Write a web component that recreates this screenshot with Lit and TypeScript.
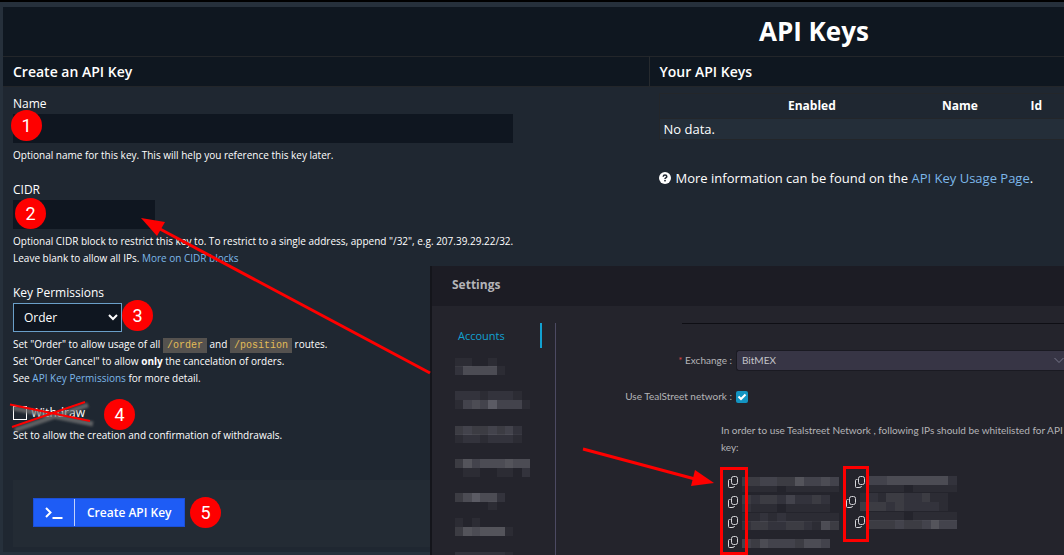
import { LitElement, html, svg, css } from "lit";
import { customElement, property } from "lit/decorators.js";

interface MaskRow {
  y: number;
  cells: string;
}

const CELL_W = 8.8;

/** A pixelated strip that hides a piece of private text. */
@customElement("masked-text")
export class MaskedText extends LitElement {
  @property({ attribute: false }) rows: MaskRow[] = [];
  @property({ type: Number }) height = 20;
  @property({ type: Number }) cell = CELL_W;

  static styles = css`
    :host {
      display: block;
      flex: none;
    }
    svg {
      display: block;
    }
  `;

  render() {
    const cols = Math.max(0, ...this.rows.map((r) => r.cells.length));
    return html`<svg
      width=${cols * this.cell}
      height=${this.height}
      shape-rendering="crispEdges"
      aria-hidden="true"
    >
      ${this.rows.map((r) =>
        [...r.cells].map(
          (level, i) => svg`<rect x=${i * this.cell} y=${r.y} width=${this.cell} height="9"
            fill="#74747c" fill-opacity=${Number(level) / 10}></rect>`
        )
      )}
    </svg>`;
  }
}

const MENU_MASKS: MaskRow[] = [
  { y: 10, cells: "110010" },
  { y: 18, cells: "255551" },
  { y: 43, cells: "222122210" },
  { y: 52, cells: "145474441" },
  { y: 78, cells: "34334342" },
  { y: 86, cells: "12212221" },
  { y: 111, cells: "364555655" },
  { y: 120, cells: "011001102" },
  { y: 145, cells: "357552" },
  { y: 153, cells: "000010" },
  { y: 170, cells: "101000" },
  { y: 179, cells: "3656661" },
  { y: 204, cells: "2222221" },
];

const ADDRESSES: MaskRow[][][] = [
  [
    [{ y: 5, cells: "33443364454" }, { y: 14, cells: "11110111111" }],
    [{ y: 4, cells: "4455555552" }, { y: 13, cells: "1111011111" }],
  ],
  [
    [{ y: 3, cells: "3233242232" }, { y: 12, cells: "2111011111" }],
    [{ y: 1, cells: "1213322311" }, { y: 10, cells: "3332322221" }],
  ],
  [
    [{ y: 1, cells: "11212111111" }, { y: 9, cells: "23322332153" }],
    [{ y: 0, cells: "1111011111" }, { y: 8, cells: "3334334644" }],
  ],
  [[{ y: 7, cells: "4354443554" }]],
];

@customElement("settings-window")
export class SettingsWindow extends LitElement {
  static styles = css`
    :host {
      display: flex;
      flex-direction: column;
      box-sizing: border-box;
      overflow: hidden;
      border-left: 2px solid #14151b;
      background: #24242c;
      color: #b4b4b8;
      font: 10px/17px Lato, "Open Sans", sans-serif;
    }
    .title {
      margin: 0;
      padding: 0 20px 3px;
      background: #1c1c24;
      font: 700 12px/37px "Open Sans", "Noto Sans", sans-serif;
    }
    .body {
      display: flex;
      flex: 1;
      padding-top: 17px;
      min-height: 0;
    }
    .menu {
      flex: none;
      width: 123px;
      overflow: hidden;
      border-right: 1px solid #4c4a62;
    }
    .item {
      display: block;
      width: 82px;
      padding-left: 26px;
      border-right: 2px solid #12a1d1;
      color: #12a1d1;
      font: 11px/25px "Open Sans", "Noto Sans", sans-serif;
      text-decoration: none;
    }
    .masked {
      padding-left: 23px;
    }
    .form {
      flex: 1;
      min-width: 0;
      display: flex;
      flex-direction: column;
      gap: 17px;
    }
    .rule {
      margin-left: 126px;
      margin-bottom: 9px;
      border-top: 1px solid #0e0e14;
    }
    .row {
      display: flex;
      align-items: center;
      gap: 4px;
    }
    .caption {
      flex: none;
      width: 176px;
      text-align: right;
    }
    .required {
      color: #d94848;
    }
    .picker {
      flex: 1;
      min-width: 0;
      display: grid;
      align-items: center;
    }
    .picker > * {
      grid-area: 1 / 1;
    }
    .picker svg {
      justify-self: end;
      pointer-events: none;
    }
    select {
      width: 100%;
      height: 21px;
      padding: 0 5px;
      appearance: none;
      border: 1px solid #1a1a22;
      border-right: 0;
      border-radius: 3px 0 0 3px;
      background: #373545;
      color: #c4c4c8;
      font: inherit;
    }
    .tick {
      display: grid;
      width: 12px;
      height: 17px;
      align-items: center;
    }
    .tick > * {
      grid-area: 1 / 1;
    }
    .tick input {
      width: 12px;
      height: 12px;
      margin: 0;
      appearance: none;
      border-radius: 2px;
      background: #1394c2;
    }
    .tick svg {
      pointer-events: none;
    }
    .note {
      margin: 0 0 0 165px;
    }
    .list {
      margin: -1px 0 0 172px;
    }
    .addresses {
      display: flex;
      gap: 16px;
    }
    .address {
      display: flex;
      align-items: center;
      gap: 4px;
    }
    .copy {
      display: block;
      width: 10px;
      height: 20px;
      padding: 0;
      border: 0;
      background: none;
      color: #d6d6da;
    }
    .copy svg {
      display: block;
    }
  `;

  render() {
    return html`
      <h2 class="title">Settings</h2>
      <div class="body">
        <nav class="menu">
          <a class="item" href="#accounts">Accounts</a>
          <masked-text class="masked" .rows=${MENU_MASKS} .height=${220} .cell=${8.35}></masked-text>
        </nav>
        <div class="form">
          <div class="rule"></div>
          <div class="row">
            <label class="caption" for="exchange"><span class="required">*</span> Exchange :</label>
            <div class="picker">
              <select id="exchange"><option>BitMEX</option></select>
              <svg width="11" height="7" viewBox="0 0 11 7" fill="none" stroke="#77778a">
                <path d="M1.5 1 L6 5.5 L10.500 1"></path>
              </svg>
            </div>
          </div>
          <div class="row">
            <label class="caption" for="network">Use TealStreet network :</label>
            <span class="tick">
              <input id="network" type="checkbox" checked />
              <svg width="12" height="12" viewBox="0 0 12 12" fill="none" stroke="#fff" stroke-width="2">
                <path d="M2.500 5.500 L5 8 L9.500 3.500"></path>
              </svg>
            </span>
          </div>
          <p class="note">
            In order to use Tealstreet Network , following IPs should be whitelisted for API key:
          </p>
          <div class="list">
            ${ADDRESSES.map(
              (line) => html`<div class="addresses">
                ${line.map(
                  (rows) => html`<div class="address">
                    <button class="copy" aria-label="Copy address">
                      <svg width="10" height="12" viewBox="0 0 10 12" fill="none" stroke="currentColor">
                        <rect x="3.500" y="0.500" width="6" height="8" rx="2"></rect>
                        <path d="M2.500 3.500 H1.500 Q0.500 3.500 0.500 4.500 V10.500 Q0.500 11.500 1.500 11.500 H4 Q6.500 11.500 6.500 10"></path>
                      </svg>
                    </button>
                    <masked-text .rows=${rows}></masked-text>
                  </div>`
                )}
              </div>`
            )}
          </div>
        </div>
      </div>
    `;
  }
}

@customElement("app-root")
export class AppRoot extends LitElement {
  static styles = css`
    :host {
      display: block;
      position: relative;
      box-sizing: border-box;
      min-height: 100vh;
      overflow: hidden;
      border-top: 2px solid #000;
      background: #26303b;
      color: #fff;
      font: 13px/20px "Open Sans", "Noto Sans", sans-serif;
    }
    * {
      box-sizing: border-box;
    }
    a {
      color: #7db8ea;
      text-decoration: none;
    }
    .page {
      width: 153%;
      padding: 5px 3px 3px;
    }
    h1 {
      margin: 0;
      background: #0f1720;
      font-size: 26px;
      line-height: 49px;
      text-align: center;
      font-weight: 700;
    }
    .columns {
      display: grid;
      grid-template-columns: 39.8% 1fr;
      background: #1f2731;
    }
    .column + .column .subtitle {
      border-left: 1px solid #262a2e;
    }
    .subtitle {
      margin: 0;
      padding: 0 10px;
      border: 1px solid #23262a;
      border-width: 1px 0;
      background: #0f1720;
      font-size: 14px;
      line-height: 29px;
      font-weight: 600;
    }
    form {
      display: flex;
      flex-direction: column;
      gap: 16px;
      padding: 7px 10px 5px;
      font-size: 12px;
    }
    .field {
      display: grid;
      justify-items: start;
    }
    .control {
      position: relative;
      display: flex;
      align-items: center;
      gap: 4px;
    }
    .text,
    .choice {
      height: 29px;
      border: 0;
      background: #0f1620;
      color: #fff;
      font: inherit;
    }
    .text {
      width: 500px;
    }
    .short {
      width: 142px;
    }
    .choice {
      width: 109px;
      padding: 0 6px;
      border: 1px solid #6a9fc9;
    }
    .hint {
      margin: 4px 0 0;
      font-size: 10px;
      line-height: 17px;
    }
    code {
      padding: 2px 4px;
      background: #55524f;
      color: #e3bd58;
      font: 10px "Liberation Mono", monospace;
    }
    .box {
      width: 14px;
      height: 14px;
      margin: 0;
      appearance: none;
      border: 1px solid #fff;
    }
    .badge {
      position: absolute;
      width: 31px;
      height: 31px;
      border-radius: 50%;
      background: #fe0000;
      font: 18px/31px Roboto, "Liberation Sans", sans-serif;
      text-align: center;
    }
    .b1 {
      left: -2px;
      top: -4px;
    }
    .b2 {
      left: 2px;
      top: -2px;
    }
    .b3 {
      left: 109px;
      top: -3px;
    }
    .b4 {
      left: 91px;
      top: -4px;
    }
    .b5 {
      left: 157px;
      top: -1px;
    }
    .strike {
      position: absolute;
      left: -4px;
      top: -4px;
    }
    .actions {
      display: flex;
      margin-top: 20px;
      padding: 18px 20px 20px;
      background: #232b34;
    }
    .create {
      display: flex;
      height: 29px;
      padding: 0;
      border: 1px solid #1c4fd6;
      background: #1e5cf5;
      color: #fff;
      font: 600 12px/27px "Open Sans", "Noto Sans", sans-serif;
    }
    .prompt {
      display: grid;
      place-items: center;
      width: 41px;
      height: 27px;
      border-right: 1px solid #c3d2fb;
    }
    .create-text {
      padding: 0 12px;
    }
    .keys {
      padding: 6px 10px;
    }
    table {
      width: 100%;
      border-collapse: collapse;
      table-layout: fixed;
      border: 1px solid #23262a;
    }
    th {
      height: 25px;
      padding: 0;
      font-size: 12px;
      line-height: 18px;
      font-weight: 700;
    }
    .c-blank {
      width: 6%;
    }
    .c-enabled {
      width: 20%;
    }
    .c-name {
      width: 11%;
    }
    .c-id {
      width: 5%;
    }
    td {
      height: 20px;
      padding: 0 4px;
      border-top: 1px solid #23262a;
      background: #242e39;
    }
    .more {
      display: flex;
      align-items: center;
      gap: 5px;
      margin: 28px 0 0;
    }
    .window {
      position: absolute;
      left: 430px;
      right: 0;
      top: 264px;
      bottom: 0;
    }
    .drawing {
      position: absolute;
      left: 0;
      top: -2px;
      pointer-events: none;
    }
  `;

  render() {
    return html`
      <div class="page">
        <h1>API Keys</h1>
        <div class="columns">
          <section class="column">
            <h2 class="subtitle">Create an API Key</h2>
            <form @submit=${(e: Event) => e.preventDefault()}>
              <div class="field">
                <label for="name">Name</label>
                <div class="control">
                  <input class="text" id="name" type="text" />
                  <span class="badge b1">1</span>
                </div>
                <p class="hint">Optional name for this key. This will help you reference this key later.</p>
              </div>
              <div class="field">
                <label for="cidr">CIDR</label>
                <div class="control">
                  <input class="text short" id="cidr" type="text" />
                  <span class="badge b2">2</span>
                </div>
                <p class="hint">
                  Optional CIDR block to restrict this key to. To restrict to a single address, append "/32",
                  e.g. 207.39.29.22/32.<br />
                  Leave blank to allow all IPs. <a href="#cidr-help">More on CIDR blocks</a>
                </p>
              </div>
              <div class="field">
                <label for="permissions">Key Permissions</label>
                <div class="control">
                  <select class="choice" id="permissions"><option>Order</option></select>
                  <span class="badge b3">3</span>
                </div>
                <p class="hint">
                  Set "Order" to allow usage of all <code>/order</code> and <code>/position</code> routes.<br />
                  Set "Order Cancel" to allow <b>only</b> the cancelation of orders.<br />
                  See <a href="#permissions-help">API Key Permissions</a> for more detail.
                </p>
              </div>
              <div class="field">
                <div class="control">
                  <input class="box" id="withdraw" type="checkbox" />
                  <label for="withdraw">Withdraw</label>
                  <svg class="strike" width="90" height="34" viewBox="0 0 90 34" fill="none">
                    <defs>
                      <filter id="soft" x="-10%" y="-30%" width="120%" height="160%">
                        <feGaussianBlur stdDeviation="1"></feGaussianBlur>
                      </filter>
                    </defs>
                    <path d="M4 9 L84 25 M6 31 L79 6" stroke="#777" stroke-opacity=".7" stroke-width="5" filter="url(#soft)"></path>
                    <path d="M1 5.500 L81 22 M3 28 L76 3" stroke="#fe0000" stroke-width="2"></path>
                  </svg>
                  <span class="badge b4">4</span>
                </div>
                <p class="hint">Set to allow the creation and confirmation of withdrawals.</p>
              </div>
              <div class="actions">
                <div class="control">
                  <button class="create" type="submit">
                    <span class="prompt">
                      <svg width="18" height="13" viewBox="0 0 18 13" fill="none" stroke="#fff" stroke-width="2">
                        <path d="M1 2 L5.500 6.500 L1 11 M7.500 12 H17.500"></path>
                      </svg>
                    </span>
                    <span class="create-text">Create API Key</span>
                  </button>
                  <span class="badge b5">5</span>
                </div>
              </div>
            </form>
          </section>
          <section class="column">
            <h2 class="subtitle">Your API Keys</h2>
            <div class="keys">
              <table>
                <thead>
                  <tr>
                    <th class="c-blank"></th>
                    <th class="c-enabled">Enabled</th>
                    <th class="c-name">Name</th>
                    <th class="c-id">Id</th>
                    <th></th>
                  </tr>
                </thead>
                <tbody>
                  <tr>
                    <td colspan="5">No data.</td>
                  </tr>
                </tbody>
              </table>
              <p class="more">
                <svg width="12" height="12" viewBox="0 0 12 12">
                  <circle cx="6" cy="6" r="6" fill="#fff"></circle>
                  <path d="M4.200 4.700 Q4.300 3 6 3 Q7.800 3 7.800 4.500 Q7.800 5.400 6.800 5.800 Q6 6.200 6 7" fill="none" stroke="#1f2731" stroke-width="1.500"></path>
                  <rect x="5.200" y="7.900" width="1.600" height="1.500" fill="#1f2731"></rect>
                </svg>
                <span>More information can be found on the <a href="#usage">API Key Usage Page</a>.</span>
              </p>
            </div>
          </section>
        </div>
      </div>
      <settings-window class="window"></settings-window>
      <svg class="drawing" width="900" height="555" viewBox="0 0 900 555">
        <path d="M160 229 L430 373" stroke="#fe0000" stroke-width="3"></path>
        <path d="M141 218 L165 222 L157 236 Z" fill="#fe0000"></path>
        <path d="M583 449 L695 479" stroke="#fe0000" stroke-width="3"></path>
        <path d="M714 483 L695 470 L691 486 Z" fill="#fe0000"></path>
        <rect x="721.500" y="468.500" width="25" height="85" fill="none" stroke="#fe0000" stroke-width="3"></rect>
        <rect x="844.500" y="467.500" width="23" height="73" fill="none" stroke="#fe0000" stroke-width="3"></rect>
      </svg>
    `;
  }
}
